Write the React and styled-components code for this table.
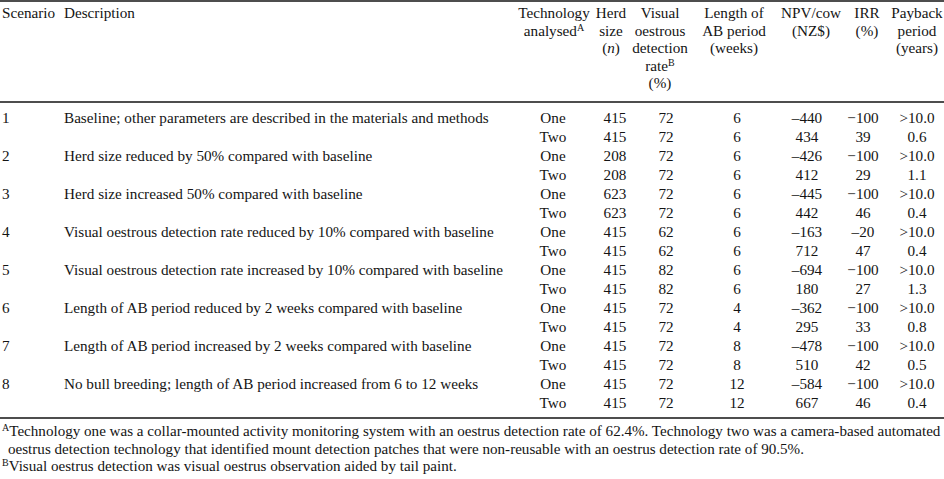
import React from "react";
import styled, { createGlobalStyle } from "styled-components";

const GlobalStyle = createGlobalStyle`
  html, body {
    margin: 0;
    padding: 0;
    background: #fff;
  }
  body {
    font-family: "Liberation Serif", "Times New Roman", serif;
    font-size: 15.2px;
    color: #141414;
  }
`;

// scenario, description, technology, herd, visual, length, npv, irr, payback
const COLS = "63px 453px 76px 38px 60px 88px 66px 46px 54px";
const SHIFTS = [-1, 4, 6, 3, -4, -4, 0];
const RULE = "2px solid #4d4d4d";

const Table = styled.div`
  width: 944px;
`;

const Head = styled.div`
  display: grid;
  grid-template-columns: ${COLS};
  border-top: ${RULE};
  border-bottom: ${RULE};
  padding: 2px 0 9px;
  line-height: 17.6px;
`;

const HeadCell = styled.div`
  display: flex;
  flex-direction: column;
  align-items: ${(p) => (p.$left ? "flex-start" : "center")};
  padding-left: ${(p) => p.$pad || 0}px;
  white-space: nowrap;
`;

const Body = styled.div`
  padding: 5px 0;
  border-bottom: ${RULE};
`;

const Row = styled.div`
  display: grid;
  grid-template-columns: ${COLS};
  height: 19px;
  line-height: 19px;
`;

const TextCell = styled.div`
  padding-left: ${(p) => p.$pad || 0}px;
  white-space: nowrap;
`;

const Cell = styled.div`
  display: flex;
  justify-content: center;
  white-space: nowrap;
  padding-left: ${(p) => Math.max(0, p.$shift * 2)}px;
  padding-right: ${(p) => Math.max(0, -p.$shift * 2)}px;
`;

const Sup = styled.sup`
  font-size: 10px;
  line-height: 0;
  vertical-align: 5px;
`;

const Notes = styled.div`
  padding-top: 4px;
  font-size: 15.1px;
  line-height: 17.6px;
`;

const Note = styled.p`
  margin: 0;
  padding-left: 8px;
  text-indent: -6px;
  white-space: nowrap;
`;

const scenarios = [
  [1, "Baseline; other parameters are described in the materials and methods",
    ["One", 415, 72, 6, "–440", "−100", ">10.0"], ["Two", 415, 72, 6, "434", "39", "0.6"]],
  [2, "Herd size reduced by 50% compared with baseline",
    ["One", 208, 72, 6, "–426", "−100", ">10.0"], ["Two", 208, 72, 6, "412", "29", "1.1"]],
  [3, "Herd size increased 50% compared with baseline",
    ["One", 623, 72, 6, "–445", "−100", ">10.0"], ["Two", 623, 72, 6, "442", "46", "0.4"]],
  [4, "Visual oestrous detection rate reduced by 10% compared with baseline",
    ["One", 415, 62, 6, "–163", "–20", ">10.0"], ["Two", 415, 62, 6, "712", "47", "0.4"]],
  [5, "Visual oestrous detection rate increased by 10% compared with baseline",
    ["One", 415, 82, 6, "–694", "−100", ">10.0"], ["Two", 415, 82, 6, "180", "27", "1.3"]],
  [6, "Length of AB period reduced by 2 weeks compared with baseline",
    ["One", 415, 72, 4, "–362", "−100", ">10.0"], ["Two", 415, 72, 4, "295", "33", "0.8"]],
  [7, "Length of AB period increased by 2 weeks compared with baseline",
    ["One", 415, 72, 8, "–478", "−100", ">10.0"], ["Two", 415, 72, 8, "510", "42", "0.5"]],
  [8, "No bull breeding; length of AB period increased from 6 to 12 weeks",
    ["One", 415, 72, 12, "–584", "−100", ">10.0"], ["Two", 415, 72, 12, "667", "46", "0.4"]],
];

const DataRow = ({ id, desc, values }) => (
  <Row>
    <TextCell $pad={2}>{id}</TextCell>
    <TextCell $pad={1}>{desc}</TextCell>
    {values.map((v, i) => (
      <Cell key={i} $shift={SHIFTS[i]}>{v}</Cell>
    ))}
  </Row>
);

export default function App() {
  return (
    <>
      <GlobalStyle />
      <Table>
        <Head>
          <HeadCell $left $pad={2}>Scenario</HeadCell>
          <HeadCell $left $pad={1}>Description</HeadCell>
          <HeadCell><span>Technology</span><span>analysed<Sup>A</Sup></span></HeadCell>
          <HeadCell><span>Herd</span><span>size</span><span>(<i>n</i>)</span></HeadCell>
          <HeadCell>
            <span>Visual</span><span>oestrous</span><span>detection</span>
            <span>rate<Sup>B</Sup></span><span>(%)</span>
          </HeadCell>
          <HeadCell><span>Length of</span><span>AB period</span><span>(weeks)</span></HeadCell>
          <HeadCell><span>NPV/cow</span><span>(NZ$)</span></HeadCell>
          <HeadCell><span>IRR</span><span>(%)</span></HeadCell>
          <HeadCell><span>Payback</span><span>period</span><span>(years)</span></HeadCell>
        </Head>
        <Body>
          {scenarios.map(([id, desc, one, two]) => (
            <React.Fragment key={id}>
              <DataRow id={id} desc={desc} values={one} />
              <DataRow id="" desc="" values={two} />
            </React.Fragment>
          ))}
        </Body>
        <Notes>
          <Note>
            <Sup>A</Sup>Technology one was a collar-mounted activity monitoring system with an oestrus detection rate of 62.4%. Technology two was a camera-based automated
            <br />oestrus detection technology that identified mount detection patches that were non-reusable with an oestrus detection rate of 90.5%.
          </Note>
          <Note>
            <Sup>B</Sup>Visual oestrus detection was visual oestrus observation aided by tail paint.
          </Note>
        </Notes>
      </Table>
    </>
  );
}
